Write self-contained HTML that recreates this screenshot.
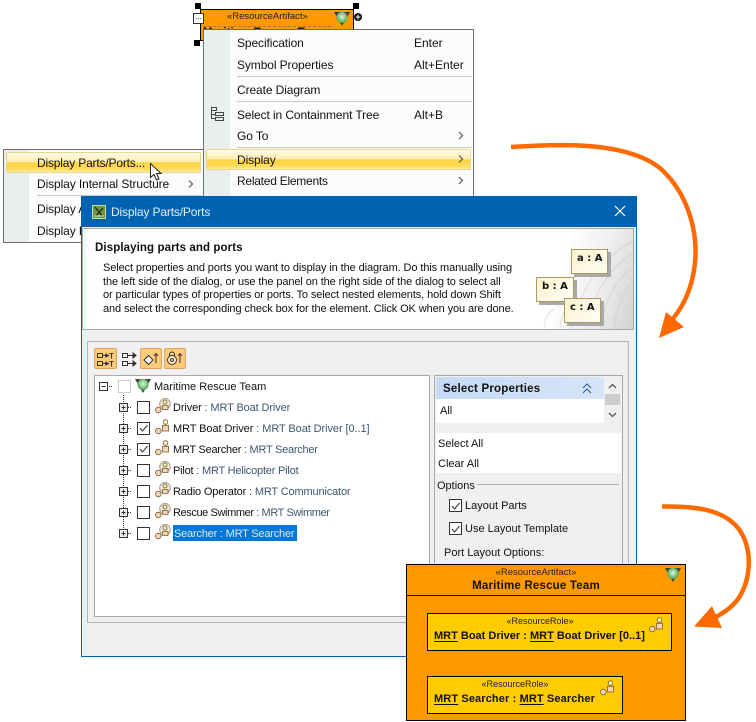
<!DOCTYPE html>
<html><head><meta charset="utf-8"><style>
html,body{margin:0;padding:0;background:#fff}
#r{position:relative;width:756px;height:722px;overflow:hidden;font:12px "Liberation Sans",sans-serif;color:#111;background:#fff}
#r div,#r svg{position:absolute}
.t{white-space:nowrap;line-height:14px;height:14px}
.m{letter-spacing:-.1px}
.s{font-size:11px;margin-top:1px}
.hl{background:linear-gradient(#fffbe6 0,#ffeeb0 48%,#ffd43e 50%,#ffdc5c 85%,#ffeaa0 100%);border:1px solid #e6d68e;box-sizing:border-box;border-radius:1px}
.sep{height:1px;background:#c8c8c8}
.cb{width:13px;height:13px;box-sizing:border-box;border:1px solid #333;background:#fff}
.tb{background:#fdca7c;border:1px solid #dba65c;box-sizing:border-box;border-radius:2px}
.n{background:linear-gradient(135deg,#fdf3cf,#fffdf3);border:1px solid #a89a62;box-sizing:border-box;box-shadow:3px 3px 0 #a9a9a9;font:bold 10px/17px "DejaVu Sans",sans-serif;color:#111;white-space:nowrap;padding-left:5px}
.g{color:#3d5672}
u{text-underline-offset:2px}
</style></head><body><div id="r">
<svg width="0" height="0" style="left:0;top:0"><defs>
<radialGradient id="gb" cx=".5" cy=".45" r=".55"><stop offset="0" stop-color="#e2f6e2"/><stop offset=".5" stop-color="#8ed08e"/><stop offset="1" stop-color="#4f9f55"/></radialGradient>
<symbol id="sh" viewBox="0 0 16 16"><path d="M0 1h16l-8 14z" fill="#3a4436"/><circle cx="8" cy="6.500" r="5.600" fill="url(#gb)"/></symbol>
<symbol id="p1" viewBox="0 0 16 16"><circle cx="10" cy="5.800" r="5.300" fill="#f2ebe0" stroke="#a89a88"/><circle cx="10" cy="4" r="2" fill="#f6f2b8" stroke="#6d5a2a" stroke-width=".8"/><path d="M7.500 11.500V7.500h5.500v4z" fill="#f7d3b5" stroke="#7a5a30" stroke-width=".8"/><circle cx="3.300" cy="12" r="2.800" fill="#f7d3b5" stroke="#7a5a30" stroke-width=".8"/></symbol>
<symbol id="p2" viewBox="0 0 16 16"><circle cx="10.500" cy="3" r="2.300" fill="#fbf8c0" stroke="#6d5a2a" stroke-width=".8"/><path d="M7.500 12V6.300h6V12z" fill="#f7d3b5" stroke="#7a5a30" stroke-width=".8"/><circle cx="3.300" cy="12" r="2.800" fill="#f7d3b5" stroke="#7a5a30" stroke-width=".8"/></symbol>
</defs></svg>

<!-- diagram element -->
<div style="left:200px;top:9px;width:154px;height:32px;background:#ff9900;border:1px solid #000;box-sizing:border-box"></div>
<div class="t" style="left:227px;top:10px;font-size:9.500px;color:#222">«ResourceArtifact»</div>
<div style="left:203px;top:26px;width:128px;height:0;border-top:1px dashed #b07a20"></div>
<div class="t" style="left:203px;top:26px;font-weight:bold;font-size:11.500px">Maritime Rescue Team</div>
<svg style="left:334px;top:11px" width="16" height="16"><use href="#sh"/></svg>
<div style="left:195px;top:3px;width:6px;height:6px;background:#000"></div>
<div style="left:353px;top:3px;width:6px;height:6px;background:#000"></div>
<div style="left:194px;top:40px;width:6px;height:6px;background:#000"></div>
<div style="left:193px;top:13px;width:9px;height:9px;background:#fff;border:1px solid #333;font-size:8px;line-height:6px;text-align:center">...</div>
<div style="left:354px;top:13px;width:8px;height:8px;background:#111;border-radius:50%;color:#fff;font:bold 9px/8px 'Liberation Sans';text-align:center">+</div>

<!-- main context menu -->
<div style="left:203px;top:29px;width:271px;height:180px;background:#fcfcfc;border:1px solid #6f6f6f;box-sizing:border-box"></div>
<div style="left:204px;top:30px;width:26px;height:178px;background:#e9eeee"></div>
<div class="t m" style="left:237px;top:36px">Specification</div><div class="t" style="left:414px;top:36px">Enter</div>
<div class="t m" style="left:237px;top:58px">Symbol Properties</div><div class="t" style="left:414px;top:58px">Alt+Enter</div>
<div class="sep" style="left:237px;top:76px;width:235px"></div>
<div class="t m" style="left:237px;top:83px">Create Diagram</div>
<div class="sep" style="left:237px;top:101px;width:235px"></div>
<div class="t m" style="left:237px;top:108px">Select in Containment Tree</div><div class="t" style="left:414px;top:108px">Alt+B</div>
<svg style="left:210px;top:107px" width="15" height="15" fill="none" stroke="#444"><path d="M1.500.5h5v3h-5zM1.500 3.500v8h4M1.500 7.500h4M5.500 5.500h8v3h-8zM5.500 10.500h8v3h-8z"/></svg>
<div class="t m" style="left:237px;top:129px">Go To</div>
<div class="sep" style="left:237px;top:147px;width:235px"></div>
<div class="hl" style="left:206px;top:149px;width:265px;height:21px"></div>
<div class="t m" style="left:237px;top:153px">Display</div>
<div class="t" style="left:237px;top:174px;letter-spacing:-.25px">Related Elements</div>
<svg style="left:457px;top:130px" width="8" height="60" fill="none" stroke="#555" stroke-width="1.200"><path d="M2 2l3.500 3.500-3.500 3.500M2 25.500l3.500 3.500-3.500 3.500M2 47l3.500 3.500-3.500 3.500"/></svg>

<!-- sub menu -->
<div style="left:3px;top:149px;width:201px;height:94px;background:#fcfcfc;border:1px solid #6f6f6f;box-sizing:border-box"></div>
<div style="left:4px;top:150px;width:25px;height:92px;background:#e9eeee"></div>
<div class="hl" style="left:6px;top:152px;width:195px;height:21px"></div>
<div class="t" style="left:37px;top:156px;letter-spacing:-.18px">Display Parts/Ports...</div>
<div class="t m" style="left:37px;top:177px">Display Internal Structure</div>
<svg style="left:187px;top:179px" width="8" height="10" fill="none" stroke="#555" stroke-width="1.200"><path d="M2 1.500l3.500 3.500-3.500 3.500"/></svg>
<div class="sep" style="left:37px;top:195px;width:165px"></div>
<div class="t m" style="left:37px;top:202px">Display All</div>
<div class="t m" style="left:37px;top:224px">Display Paths</div>
<svg style="left:149px;top:162px" width="14" height="20"><path d="M1.500 1.500v14l3.500-3 2.500 5.500 2.500-1-2.500-5.500h4.500z" fill="#fff" stroke="#222"/></svg>

<!-- dialog -->
<div style="left:81px;top:196px;width:556px;height:461px;background:#f0f0f0;border:1px solid #0063b1;box-sizing:border-box"></div>
<div style="left:81px;top:196px;width:556px;height:31px;background:#0063b1"></div>
<svg style="left:92px;top:205px" width="14" height="14"><rect x=".5" y=".5" width="13" height="13" fill="#6d9440" stroke="#c9d9a4"/><path d="M3 2l8 10M11 3L4 11" stroke="#1c2a10" stroke-width="1.300"/><path d="M2 11h10" stroke="#e8f0c8"/></svg>
<div class="t" style="left:111px;top:205px;color:#e6f0f8;letter-spacing:-.15px">Display Parts/Ports</div>
<svg style="left:614px;top:205px" width="12" height="12" stroke="#fff" stroke-width="1.200"><path d="M1 1l10 10M11 1L1 11"/></svg>

<div style="left:82px;top:228px;width:552px;height:102px;background:#fff;border:1px solid #a8a8a8;box-sizing:border-box"></div>
<div style="left:520px;top:229px;width:113px;height:100px;background:linear-gradient(105deg,#fff 0,#fff 35%,#eee 68%,#d2d2d2 100%)"></div>
<svg style="left:530px;top:229px" width="103" height="100" fill="none" stroke="#c4c4c4" stroke-width=".8" opacity=".6"><path d="M103 12C70 30 50 60 42 100M103 24C78 40 62 68 56 100M103 38C86 50 74 74 70 100M103 52C94 60 86 80 84 100M30 100c0-14 8-24 18-30M14 100c0-10 4-16 10-20"/></svg>
<div class="t" style="left:95px;top:241px;font-weight:bold;font-size:11.500px;letter-spacing:.1px">Displaying parts and ports</div>
<div class="t s" style="left:103px;top:260px;letter-spacing:-.1px">Select properties and ports you want to display in the diagram. Do this manually using</div>
<div class="t s" style="left:103px;top:274px;letter-spacing:-.1px">the left side of the dialog, or use the panel on the right side of the dialog to select all</div>
<div class="t s" style="left:103px;top:287px;letter-spacing:-.1px">or particular types of properties or ports. To select nested elements, hold down Shift</div>
<div class="t s" style="left:103px;top:301px;letter-spacing:-.1px">and select the corresponding check box for the element. Click OK when you are done.</div>
<div class="n" style="left:571px;top:249px;width:37px;height:25px">a : A</div>
<div class="n" style="left:536px;top:277px;width:38px;height:25px">b : A</div>
<div class="n" style="left:564px;top:298px;width:37px;height:25px">c : A</div>

<!-- content panel -->
<div style="left:87px;top:341px;width:542px;height:282px;border:1px solid #b4b4b4;box-sizing:border-box"></div>
<div class="tb" style="left:94px;top:348px;width:23px;height:21px"></div>
<div class="tb" style="left:140px;top:348px;width:22px;height:21px"></div>
<div class="tb" style="left:164px;top:348px;width:22px;height:21px"></div>
<svg style="left:97px;top:352px" width="18" height="15" fill="none" stroke="#333"><path d="M.5 1.500h5v4h-5zM.5 9.500h5v4h-5zM6 3.500h5M6 11.500h5M12.500 1.500h4M14.500 1.500v5M12.500 9.500h4M14.500 9.500v5"/><path d="M9 2l2.500 1.500L9 5zM9 10l2.500 1.500L9 13z" fill="#333"/></svg>
<svg style="left:122px;top:352px" width="16" height="15" fill="none" stroke="#333"><path d="M.5 1.500h5v4h-5zM.5 9.500h5v4h-5zM6 3.500h6M6 11.500h6"/><path d="M11 1l3 2.500-3 2.500zM11 9l3 2.500-3 2.500z" fill="#333"/></svg>
<svg style="left:143px;top:351px" width="17" height="15" fill="none" stroke="#333"><path d="M1 9l4.500-4.500L10 9l-4.500 4.500z" fill="#fff"/><path d="M13 12V3M11 5l2-2.500L15 5"/></svg>
<svg style="left:166px;top:351px" width="18" height="15" fill="none" stroke="#333"><circle cx="6" cy="9" r="4.500" fill="#fdeac8"/><circle cx="6" cy="9" r="1.500"/><path d="M3.500 5V3.500a2.500 2.500 0 015 0V5M14 12V3M12 5l2-2.500L16 5"/></svg>

<!-- tree -->
<div style="left:94px;top:375px;width:336px;height:242px;background:#fff;border:1px solid #a8a8a8;box-sizing:border-box"></div>
<svg style="left:98px;top:380px" width="45" height="160" fill="none" stroke="#333"><path d="M1.500 2.500h8v8h-8zM3.500 6.500h4"/><path d="M11 6.500h4" stroke-dasharray="1 1"/><path d="M25.500 15v140" stroke-dasharray="1 1"/></svg>
<div class="cb" style="left:118px;top:380px;border-color:#ccc;width:13px;height:13px"></div>
<svg style="left:135px;top:378px" width="16" height="16"><use href="#sh"/></svg>
<div class="t s" style="left:154px;top:379px">Maritime Rescue Team</div>

<svg style="left:117px;top:400px" width="22" height="140" fill="none" stroke="#333"><g id="e"><path d="M2.500 3.500h8v8h-8z" fill="#eee"/><path d="M4.500 7.500h4M6.500 5.500v4"/><path d="M11 7.500h4" stroke-dasharray="1 1"/></g><use href="#e" y="21"/><use href="#e" y="42"/><use href="#e" y="63"/><use href="#e" y="84"/><use href="#e" y="105"/><use href="#e" y="126"/></svg>

<div class="cb" style="left:137px;top:401px"></div><svg style="left:155px;top:398px" width="16" height="16"><use href="#p1"/></svg><div class="t s" style="left:173px;top:400px;letter-spacing:-.12px">Driver <span class="g">: MRT Boat Driver</span></div>
<div class="cb" style="left:137px;top:422px"></div><svg style="left:155px;top:419px" width="16" height="16"><use href="#p2"/></svg><div class="t s" style="left:173px;top:421px;letter-spacing:-.08px">MRT Boat Driver <span class="g">: MRT Boat Driver [0..1]</span></div>
<div class="cb" style="left:137px;top:443px"></div><svg style="left:155px;top:440px" width="16" height="16"><use href="#p2"/></svg><div class="t s" style="left:173px;top:442px;letter-spacing:-.25px">MRT Searcher <span class="g">: MRT Searcher</span></div>
<div class="cb" style="left:137px;top:464px"></div><svg style="left:155px;top:461px" width="16" height="16"><use href="#p1"/></svg><div class="t s" style="left:173px;top:463px;letter-spacing:-.2px">Pilot <span class="g">: MRT Helicopter Pilot</span></div>
<div class="cb" style="left:137px;top:485px"></div><svg style="left:155px;top:482px" width="16" height="16"><use href="#p1"/></svg><div class="t s" style="left:173px;top:484px;letter-spacing:-.15px">Radio Operator <span class="g">: MRT Communicator</span></div>
<div class="cb" style="left:137px;top:506px"></div><svg style="left:155px;top:503px" width="16" height="16"><use href="#p1"/></svg><div class="t s" style="left:173px;top:505px;letter-spacing:-.4px">Rescue Swimmer <span class="g">: MRT Swimmer</span></div>
<div class="cb" style="left:137px;top:527px"></div><svg style="left:155px;top:524px" width="16" height="16"><use href="#p1"/></svg>
<div style="left:173px;top:525px;width:124px;height:16px;background:#0078d7"></div>
<div class="t s" style="left:174px;top:526px;color:#dfeaf5;letter-spacing:-.2px">Searcher : MRT Searcher</div>
<svg style="left:139px;top:424px" width="10" height="32" fill="none" stroke="#444" stroke-width="1.200"><path d="M1 4l2.500 3L8.500 1M1 25l2.500 3 5-6"/></svg>

<!-- right panel -->
<div style="left:434px;top:375px;width:189px;height:200px;border:1px solid #a8a8a8;box-sizing:border-box"></div>
<div style="left:436px;top:377px;width:168px;height:22px;background:linear-gradient(90deg,#c6daf5,#d6e5f9)"></div>
<div class="t" style="left:443px;top:382px;font-weight:bold;font-size:11.500px;letter-spacing:.2px">Select Properties</div>
<svg style="left:582px;top:383px" width="10" height="11" fill="none" stroke="#2a5a8a"><path d="M1 5l4-4 4 4M1 10l4-4 4 4"/></svg>
<div style="left:436px;top:399px;width:168px;height:24px;background:#fff"></div>
<div class="t s" style="left:440px;top:403px">All</div>
<svg style="left:608px;top:381px" width="9" height="40" fill="none" stroke="#555" stroke-width="1.300"><path d="M1 7l3.500-3.500L8 7M1 32l3.500 3.500L8 32"/></svg>
<div style="left:605px;top:394px;width:15px;height:11px;background:#cdcdcd"></div>
<div style="left:436px;top:433px;width:185px;height:40px;background:#fff"></div>
<div class="t s" style="left:438px;top:436px">Select All</div>
<div class="t s" style="left:438px;top:456px">Clear All</div>
<div class="t s" style="left:437px;top:478px">Options</div>
<div class="sep" style="left:477px;top:484px;width:142px;background:#b0b0b0"></div>
<div class="cb" style="left:449px;top:499px"></div>
<div class="t s" style="left:465px;top:498px">Layout Parts</div>
<div class="cb" style="left:449px;top:522px"></div>
<div class="t s" style="left:465px;top:521px">Use Layout Template</div>
<svg style="left:451px;top:502px" width="10" height="32" fill="none" stroke="#444" stroke-width="1.200"><path d="M1 4l2.500 3L8.500 1M1 27l2.500 3 5-6"/></svg>
<div class="t s" style="left:444px;top:545px">Port Layout Options:</div>

<!-- result diagram -->
<div style="left:406px;top:564px;width:280px;height:157px;background:#ff9900;border:1px solid #000;box-sizing:border-box"></div>
<div style="left:407px;top:595px;width:278px;height:1px;background:#000"></div>
<div class="t" style="left:406px;top:566px;width:260px;text-align:center;font-size:9.500px;color:#222">«ResourceArtifact»</div>
<div class="t" style="left:406px;top:579px;width:260px;text-align:center;font-weight:bold;font-size:11.500px;letter-spacing:.2px">Maritime Rescue Team</div>
<svg style="left:665px;top:567px" width="16" height="16"><use href="#sh"/></svg>
<div style="left:427px;top:613px;width:245px;height:38px;background:#ffcc00;border:1px solid #000;box-sizing:border-box"></div>
<div class="t" style="left:427px;top:614px;width:226px;text-align:center;font-size:9px;color:#222">«ResourceRole»</div>
<div class="t" style="left:434px;top:629px;font-weight:bold;font-size:11px"><u>MRT</u> Boat Driver : <u>MRT</u> Boat Driver [0..1]</div>
<svg style="left:649px;top:617px" width="16" height="16"><use href="#p2"/></svg>
<div style="left:427px;top:676px;width:196px;height:38px;background:#ffcc00;border:1px solid #000;box-sizing:border-box"></div>
<div class="t" style="left:427px;top:677px;width:176px;text-align:center;font-size:9px;color:#222">«ResourceRole»</div>
<div class="t" style="left:434px;top:692px;font-weight:bold;font-size:11px;letter-spacing:.12px"><u>MRT</u> Searcher : <u>MRT</u> Searcher</div>
<svg style="left:600px;top:680px" width="16" height="16"><use href="#p2"/></svg>

<!-- arrows -->
<svg style="left:0;top:0" width="756" height="722" fill="none">
<path d="M511 147C560 144 625 141 660 168C690 195 702 240 692 280C688 296 681 310 670 322" stroke="#ff6a00" stroke-width="4.500"/>
<path d="M659 338L666 312L684 327Z" fill="#ff6a00"/>
<path d="M662 506.500C690 506 722 508 738 528C752 546 752 575 740 596C734 606 725 612 714 618" stroke="#ff6a00" stroke-width="4.500"/>
<path d="M694 626.500L712 606L722 628Z" fill="#ff6a00"/>
</svg>
</div></body></html>
